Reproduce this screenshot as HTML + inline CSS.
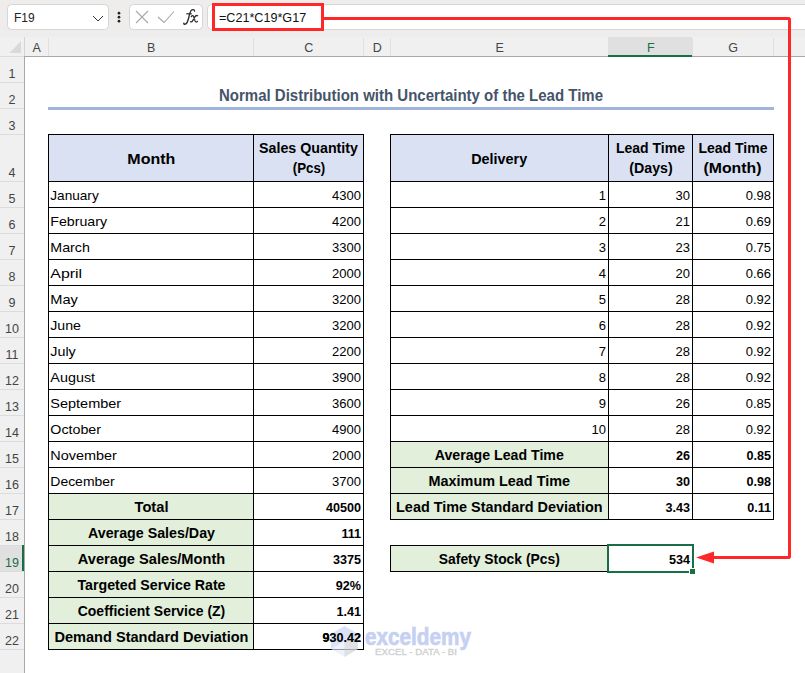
<!DOCTYPE html>
<html><head><meta charset="utf-8"><style>
html,body{margin:0;padding:0;background:#fff;overflow:hidden}
svg{display:block}
text{font-family:"Liberation Sans", sans-serif}
</style></head><body>
<svg width="805" height="673" viewBox="0 0 805 673">
<rect x="0" y="0" width="805" height="673" fill="#ffffff"/>
<rect x="0" y="0" width="805" height="37" fill="#EFEDEC"/>
<rect x="0" y="37" width="805" height="19" fill="#F0F0F0"/>
<rect x="0" y="56" width="24" height="617" fill="#F0F0F0"/>
<rect x="608" y="37" width="84" height="19" fill="#E0E0E0"/>
<rect x="0" y="545" width="24" height="26" fill="#E0E0E0"/>
<rect x="48" y="38" width="1" height="18" fill="#E0E0E0"/>
<rect x="253" y="38" width="1" height="18" fill="#E0E0E0"/>
<rect x="363" y="38" width="1" height="18" fill="#E0E0E0"/>
<rect x="390" y="38" width="1" height="18" fill="#E0E0E0"/>
<rect x="608" y="38" width="1" height="18" fill="#E0E0E0"/>
<rect x="692" y="38" width="1" height="18" fill="#E0E0E0"/>
<rect x="773" y="38" width="1" height="18" fill="#E0E0E0"/>
<rect x="860" y="38" width="1" height="18" fill="#E0E0E0"/>
<rect x="24" y="37" width="1" height="19" fill="#D4D4D4"/>
<rect x="0" y="82" width="24" height="1" fill="#DCDCDC"/>
<rect x="0" y="108" width="24" height="1" fill="#DCDCDC"/>
<rect x="0" y="134" width="24" height="1" fill="#DCDCDC"/>
<rect x="0" y="181" width="24" height="1" fill="#DCDCDC"/>
<rect x="0" y="207" width="24" height="1" fill="#DCDCDC"/>
<rect x="0" y="233" width="24" height="1" fill="#DCDCDC"/>
<rect x="0" y="259" width="24" height="1" fill="#DCDCDC"/>
<rect x="0" y="285" width="24" height="1" fill="#DCDCDC"/>
<rect x="0" y="311" width="24" height="1" fill="#DCDCDC"/>
<rect x="0" y="337" width="24" height="1" fill="#DCDCDC"/>
<rect x="0" y="363" width="24" height="1" fill="#DCDCDC"/>
<rect x="0" y="389" width="24" height="1" fill="#DCDCDC"/>
<rect x="0" y="415" width="24" height="1" fill="#DCDCDC"/>
<rect x="0" y="441" width="24" height="1" fill="#DCDCDC"/>
<rect x="0" y="467" width="24" height="1" fill="#DCDCDC"/>
<rect x="0" y="493" width="24" height="1" fill="#DCDCDC"/>
<rect x="0" y="519" width="24" height="1" fill="#DCDCDC"/>
<rect x="0" y="545" width="24" height="1" fill="#DCDCDC"/>
<rect x="0" y="571" width="24" height="1" fill="#DCDCDC"/>
<rect x="0" y="597" width="24" height="1" fill="#DCDCDC"/>
<rect x="0" y="623" width="24" height="1" fill="#DCDCDC"/>
<rect x="0" y="649" width="24" height="1" fill="#DCDCDC"/>
<rect x="0" y="675" width="24" height="1" fill="#DCDCDC"/>
<rect x="24" y="56" width="781" height="1" fill="#A8A8A8"/>
<rect x="24" y="56" width="1" height="617" fill="#A8A8A8"/>
<polygon points="9.5,53 21,53 21,41" fill="#D9D9D9"/>
<rect x="0" y="56" width="24" height="1" fill="#DCDCDC"/>
<rect x="608" y="55" width="84" height="2" fill="#186E45"/>
<rect x="22" y="545" width="2" height="26" fill="#186E45"/>
<text x="36.7" y="52" font-size="12.5" fill="#444444" text-anchor="middle">A</text>
<text x="151.2" y="52" font-size="12.5" fill="#444444" text-anchor="middle">B</text>
<text x="308.7" y="52" font-size="12.5" fill="#444444" text-anchor="middle">C</text>
<text x="377.2" y="52" font-size="12.5" fill="#444444" text-anchor="middle">D</text>
<text x="499.7" y="52" font-size="12.5" fill="#444444" text-anchor="middle">E</text>
<text x="650.7" y="52" font-size="12.5" fill="#186E45" text-anchor="middle">F</text>
<text x="733.2" y="52" font-size="12.5" fill="#444444" text-anchor="middle">G</text>
<text x="12" y="77.5" font-size="12.5" fill="#444444" text-anchor="middle">1</text>
<text x="12" y="103.5" font-size="12.5" fill="#444444" text-anchor="middle">2</text>
<text x="12" y="129.5" font-size="12.5" fill="#444444" text-anchor="middle">3</text>
<text x="12" y="176.5" font-size="12.5" fill="#444444" text-anchor="middle">4</text>
<text x="12" y="202.5" font-size="12.5" fill="#444444" text-anchor="middle">5</text>
<text x="12" y="228.5" font-size="12.5" fill="#444444" text-anchor="middle">6</text>
<text x="12" y="254.5" font-size="12.5" fill="#444444" text-anchor="middle">7</text>
<text x="12" y="280.5" font-size="12.5" fill="#444444" text-anchor="middle">8</text>
<text x="12" y="306.5" font-size="12.5" fill="#444444" text-anchor="middle">9</text>
<text x="12" y="332.5" font-size="12.5" fill="#444444" text-anchor="middle">10</text>
<text x="12" y="358.5" font-size="12.5" fill="#444444" text-anchor="middle">11</text>
<text x="12" y="384.5" font-size="12.5" fill="#444444" text-anchor="middle">12</text>
<text x="12" y="410.5" font-size="12.5" fill="#444444" text-anchor="middle">13</text>
<text x="12" y="436.5" font-size="12.5" fill="#444444" text-anchor="middle">14</text>
<text x="12" y="462.5" font-size="12.5" fill="#444444" text-anchor="middle">15</text>
<text x="12" y="488.5" font-size="12.5" fill="#444444" text-anchor="middle">16</text>
<text x="12" y="514.5" font-size="12.5" fill="#444444" text-anchor="middle">17</text>
<text x="12" y="540.5" font-size="12.5" fill="#444444" text-anchor="middle">18</text>
<text x="12" y="566.5" font-size="12.5" fill="#186E45" text-anchor="middle">19</text>
<text x="12" y="592.5" font-size="12.5" fill="#444444" text-anchor="middle">20</text>
<text x="12" y="618.5" font-size="12.5" fill="#444444" text-anchor="middle">21</text>
<text x="12" y="644.5" font-size="12.5" fill="#444444" text-anchor="middle">22</text>
<rect x="7.5" y="4.5" width="101" height="25" rx="4" fill="#ffffff" stroke="#D6D6D6"/>
<text x="14" y="22" font-size="12" fill="#222">F19</text>
<polyline points="93,16 98,21 103,16" fill="none" stroke="#3a3a3a" stroke-width="1"/>
<circle cx="119" cy="13.2" r="1.35" fill="#222"/>
<circle cx="119" cy="17.2" r="1.35" fill="#222"/>
<circle cx="119" cy="21.2" r="1.35" fill="#222"/>
<rect x="129.5" y="4.5" width="73" height="25" rx="4" fill="#ffffff" stroke="#D6D6D6"/>
<path d="M136,11 L148,23 M148,11 L136,23" stroke="#A8A8A8" stroke-width="1.1" fill="none"/>
<path d="M158,17 L164,22.5 L174,11.5" stroke="#A8A8A8" stroke-width="1.1" fill="none"/>
<path d="M194.6,11 C194.3,9.4 192.4,9.1 191.2,10.4 C190,11.7 189.6,14 188.9,17 C188.1,20.6 187.3,23.6 185.3,24.2 C184.3,24.5 183.6,24 183.8,23.2" fill="none" stroke="#2a2a2a" stroke-width="1.35" stroke-linecap="round"/>
<path d="M186.3,13.8 L191.8,13.8" stroke="#2a2a2a" stroke-width="1.2"/>
<path d="M191.3,16.6 C192.2,15.3 193.3,15.4 193.8,17 L195,20.9 C195.5,22.3 196.6,22.3 197.4,21.3 M197.6,15.7 C196.8,15.3 195.9,15.6 195.2,16.5 L192.6,20.9 C192,21.9 191.1,22.2 190.5,21.6" fill="none" stroke="#2a2a2a" stroke-width="1.25" stroke-linecap="round"/>
<rect x="207.5" y="4.5" width="805" height="25" rx="4" fill="#ffffff" stroke="#D6D6D6"/>
<text x="219" y="21.7" font-size="12.6" fill="#111">=C21*C19*G17</text>
<text x="411" y="100.5" font-size="15.6" font-weight="bold" fill="#44546A" text-anchor="middle" textLength="384" lengthAdjust="spacingAndGlyphs">Normal Distribution with Uncertainty of the Lead Time</text>
<rect x="48" y="107" width="726" height="3" fill="#A0B4DE"/>
<rect x="48" y="134" width="205" height="47" fill="#D9E1F2"/>
<rect x="253" y="134" width="110" height="47" fill="#D9E1F2"/>
<rect x="390" y="134" width="218" height="47" fill="#D9E1F2"/>
<rect x="608" y="134" width="84" height="47" fill="#D9E1F2"/>
<rect x="692" y="134" width="81" height="47" fill="#D9E1F2"/>
<rect x="48" y="493" width="205" height="156" fill="#E2EFDA"/>
<rect x="390" y="441" width="218" height="78" fill="#E2EFDA"/>
<rect x="390" y="545" width="218" height="26" fill="#E2EFDA"/>
<rect x="48" y="134" width="316" height="1" fill="#000"/>
<rect x="48" y="181" width="316" height="1" fill="#000"/>
<rect x="48" y="207" width="316" height="1" fill="#000"/>
<rect x="48" y="233" width="316" height="1" fill="#000"/>
<rect x="48" y="259" width="316" height="1" fill="#000"/>
<rect x="48" y="285" width="316" height="1" fill="#000"/>
<rect x="48" y="311" width="316" height="1" fill="#000"/>
<rect x="48" y="337" width="316" height="1" fill="#000"/>
<rect x="48" y="363" width="316" height="1" fill="#000"/>
<rect x="48" y="389" width="316" height="1" fill="#000"/>
<rect x="48" y="415" width="316" height="1" fill="#000"/>
<rect x="48" y="441" width="316" height="1" fill="#000"/>
<rect x="48" y="467" width="316" height="1" fill="#000"/>
<rect x="48" y="493" width="316" height="1" fill="#000"/>
<rect x="48" y="519" width="316" height="1" fill="#000"/>
<rect x="48" y="545" width="316" height="1" fill="#000"/>
<rect x="48" y="571" width="316" height="1" fill="#000"/>
<rect x="48" y="597" width="316" height="1" fill="#000"/>
<rect x="48" y="623" width="316" height="1" fill="#000"/>
<rect x="48" y="649" width="316" height="1" fill="#000"/>
<rect x="48" y="134" width="1" height="516" fill="#000"/>
<rect x="253" y="134" width="1" height="516" fill="#000"/>
<rect x="363" y="134" width="1" height="516" fill="#000"/>
<rect x="390" y="134" width="384" height="1" fill="#000"/>
<rect x="390" y="181" width="384" height="1" fill="#000"/>
<rect x="390" y="207" width="384" height="1" fill="#000"/>
<rect x="390" y="233" width="384" height="1" fill="#000"/>
<rect x="390" y="259" width="384" height="1" fill="#000"/>
<rect x="390" y="285" width="384" height="1" fill="#000"/>
<rect x="390" y="311" width="384" height="1" fill="#000"/>
<rect x="390" y="337" width="384" height="1" fill="#000"/>
<rect x="390" y="363" width="384" height="1" fill="#000"/>
<rect x="390" y="389" width="384" height="1" fill="#000"/>
<rect x="390" y="415" width="384" height="1" fill="#000"/>
<rect x="390" y="441" width="384" height="1" fill="#000"/>
<rect x="390" y="467" width="384" height="1" fill="#000"/>
<rect x="390" y="493" width="384" height="1" fill="#000"/>
<rect x="390" y="519" width="384" height="1" fill="#000"/>
<rect x="390" y="134" width="1" height="386" fill="#000"/>
<rect x="608" y="134" width="1" height="386" fill="#000"/>
<rect x="692" y="134" width="1" height="386" fill="#000"/>
<rect x="773" y="134" width="1" height="386" fill="#000"/>
<rect x="390" y="545" width="303" height="1" fill="#000"/>
<rect x="390" y="571" width="303" height="1" fill="#000"/>
<rect x="390" y="545" width="1" height="27" fill="#000"/>
<rect x="608" y="545" width="1" height="27" fill="#000"/>
<rect x="692" y="545" width="1" height="27" fill="#000"/>
<text x="151.3" y="164" font-size="14.2" font-weight="bold" fill="#000" text-anchor="middle" textLength="48" lengthAdjust="spacingAndGlyphs">Month</text>
<text x="308.5" y="152.8" font-size="14.2" font-weight="bold" fill="#000" text-anchor="middle" textLength="99" lengthAdjust="spacingAndGlyphs">Sales Quantity</text>
<text x="309" y="173.1" font-size="14.2" font-weight="bold" fill="#000" text-anchor="middle" textLength="32.5" lengthAdjust="spacingAndGlyphs">(Pcs)</text>
<text x="499.2" y="164" font-size="14.2" font-weight="bold" fill="#000" text-anchor="middle" textLength="56" lengthAdjust="spacingAndGlyphs">Delivery</text>
<text x="650.5" y="152.8" font-size="14.2" font-weight="bold" fill="#000" text-anchor="middle" textLength="69" lengthAdjust="spacingAndGlyphs">Lead Time</text>
<text x="651" y="173.1" font-size="14.2" font-weight="bold" fill="#000" text-anchor="middle" textLength="43.4" lengthAdjust="spacingAndGlyphs">(Days)</text>
<text x="733" y="152.8" font-size="14.2" font-weight="bold" fill="#000" text-anchor="middle" textLength="69" lengthAdjust="spacingAndGlyphs">Lead Time</text>
<text x="732.5" y="173.1" font-size="14.2" font-weight="bold" fill="#000" text-anchor="middle" textLength="58" lengthAdjust="spacingAndGlyphs">(Month)</text>
<text x="50.3" y="200" font-size="13.3" fill="#000" text-anchor="start" textLength="48.4" lengthAdjust="spacingAndGlyphs">January</text>
<text x="361" y="200" font-size="13" fill="#000" text-anchor="end">4300</text>
<text x="50.3" y="226" font-size="13.3" fill="#000" text-anchor="start" textLength="56.8" lengthAdjust="spacingAndGlyphs">February</text>
<text x="361" y="226" font-size="13" fill="#000" text-anchor="end">4200</text>
<text x="50.3" y="252" font-size="13.3" fill="#000" text-anchor="start" textLength="39.6" lengthAdjust="spacingAndGlyphs">March</text>
<text x="361" y="252" font-size="13" fill="#000" text-anchor="end">3300</text>
<text x="50.3" y="278" font-size="13.3" fill="#000" text-anchor="start" textLength="31.8" lengthAdjust="spacingAndGlyphs">April</text>
<text x="361" y="278" font-size="13" fill="#000" text-anchor="end">2000</text>
<text x="50.3" y="304" font-size="13.3" fill="#000" text-anchor="start" textLength="27.6" lengthAdjust="spacingAndGlyphs">May</text>
<text x="361" y="304" font-size="13" fill="#000" text-anchor="end">3200</text>
<text x="50.3" y="330" font-size="13.3" fill="#000" text-anchor="start" textLength="30.7" lengthAdjust="spacingAndGlyphs">June</text>
<text x="361" y="330" font-size="13" fill="#000" text-anchor="end">3200</text>
<text x="50.3" y="356" font-size="13.3" fill="#000" text-anchor="start" textLength="25.5" lengthAdjust="spacingAndGlyphs">July</text>
<text x="361" y="356" font-size="13" fill="#000" text-anchor="end">2200</text>
<text x="50.3" y="382" font-size="13.3" fill="#000" text-anchor="start" textLength="44.8" lengthAdjust="spacingAndGlyphs">August</text>
<text x="361" y="382" font-size="13" fill="#000" text-anchor="end">3900</text>
<text x="50.3" y="408" font-size="13.3" fill="#000" text-anchor="start" textLength="70.9" lengthAdjust="spacingAndGlyphs">September</text>
<text x="361" y="408" font-size="13" fill="#000" text-anchor="end">3600</text>
<text x="50.3" y="434" font-size="13.3" fill="#000" text-anchor="start" textLength="50.7" lengthAdjust="spacingAndGlyphs">October</text>
<text x="361" y="434" font-size="13" fill="#000" text-anchor="end">4900</text>
<text x="50.3" y="460" font-size="13.3" fill="#000" text-anchor="start" textLength="66.6" lengthAdjust="spacingAndGlyphs">November</text>
<text x="361" y="460" font-size="13" fill="#000" text-anchor="end">2000</text>
<text x="50.3" y="486" font-size="13.3" fill="#000" text-anchor="start" textLength="64.4" lengthAdjust="spacingAndGlyphs">December</text>
<text x="361" y="486" font-size="13" fill="#000" text-anchor="end">3700</text>
<text x="151.5" y="512" font-size="14.2" font-weight="bold" fill="#000" text-anchor="middle" textLength="34" lengthAdjust="spacingAndGlyphs">Total</text>
<text x="361" y="512" font-size="12.6" font-weight="bold" fill="#000" text-anchor="end">40500</text>
<text x="151.5" y="538" font-size="14.2" font-weight="bold" fill="#000" text-anchor="middle" textLength="127" lengthAdjust="spacingAndGlyphs">Average Sales/Day</text>
<text x="361" y="538" font-size="12.6" font-weight="bold" fill="#000" text-anchor="end">111</text>
<text x="151.5" y="564" font-size="14.2" font-weight="bold" fill="#000" text-anchor="middle" textLength="147.5" lengthAdjust="spacingAndGlyphs">Average Sales/Month</text>
<text x="361" y="564" font-size="12.6" font-weight="bold" fill="#000" text-anchor="end">3375</text>
<text x="151.5" y="590" font-size="14.2" font-weight="bold" fill="#000" text-anchor="middle" textLength="148" lengthAdjust="spacingAndGlyphs">Targeted Service Rate</text>
<text x="361" y="590" font-size="12.6" font-weight="bold" fill="#000" text-anchor="end">92%</text>
<text x="151.5" y="616" font-size="14.2" font-weight="bold" fill="#000" text-anchor="middle" textLength="147.5" lengthAdjust="spacingAndGlyphs">Coefficient Service (Z)</text>
<text x="361" y="616" font-size="12.6" font-weight="bold" fill="#000" text-anchor="end">1.41</text>
<text x="151.5" y="642" font-size="14.2" font-weight="bold" fill="#000" text-anchor="middle" textLength="194" lengthAdjust="spacingAndGlyphs">Demand Standard Deviation</text>
<text x="361" y="642" font-size="12.6" font-weight="bold" fill="#000" text-anchor="end">930.42</text>
<text x="606" y="200" font-size="13" fill="#000" text-anchor="end">1</text>
<text x="690" y="200" font-size="13" fill="#000" text-anchor="end">30</text>
<text x="771" y="200" font-size="13" fill="#000" text-anchor="end">0.98</text>
<text x="606" y="226" font-size="13" fill="#000" text-anchor="end">2</text>
<text x="690" y="226" font-size="13" fill="#000" text-anchor="end">21</text>
<text x="771" y="226" font-size="13" fill="#000" text-anchor="end">0.69</text>
<text x="606" y="252" font-size="13" fill="#000" text-anchor="end">3</text>
<text x="690" y="252" font-size="13" fill="#000" text-anchor="end">23</text>
<text x="771" y="252" font-size="13" fill="#000" text-anchor="end">0.75</text>
<text x="606" y="278" font-size="13" fill="#000" text-anchor="end">4</text>
<text x="690" y="278" font-size="13" fill="#000" text-anchor="end">20</text>
<text x="771" y="278" font-size="13" fill="#000" text-anchor="end">0.66</text>
<text x="606" y="304" font-size="13" fill="#000" text-anchor="end">5</text>
<text x="690" y="304" font-size="13" fill="#000" text-anchor="end">28</text>
<text x="771" y="304" font-size="13" fill="#000" text-anchor="end">0.92</text>
<text x="606" y="330" font-size="13" fill="#000" text-anchor="end">6</text>
<text x="690" y="330" font-size="13" fill="#000" text-anchor="end">28</text>
<text x="771" y="330" font-size="13" fill="#000" text-anchor="end">0.92</text>
<text x="606" y="356" font-size="13" fill="#000" text-anchor="end">7</text>
<text x="690" y="356" font-size="13" fill="#000" text-anchor="end">28</text>
<text x="771" y="356" font-size="13" fill="#000" text-anchor="end">0.92</text>
<text x="606" y="382" font-size="13" fill="#000" text-anchor="end">8</text>
<text x="690" y="382" font-size="13" fill="#000" text-anchor="end">28</text>
<text x="771" y="382" font-size="13" fill="#000" text-anchor="end">0.92</text>
<text x="606" y="408" font-size="13" fill="#000" text-anchor="end">9</text>
<text x="690" y="408" font-size="13" fill="#000" text-anchor="end">26</text>
<text x="771" y="408" font-size="13" fill="#000" text-anchor="end">0.85</text>
<text x="606" y="434" font-size="13" fill="#000" text-anchor="end">10</text>
<text x="690" y="434" font-size="13" fill="#000" text-anchor="end">28</text>
<text x="771" y="434" font-size="13" fill="#000" text-anchor="end">0.92</text>
<text x="499.3" y="460" font-size="14.2" font-weight="bold" fill="#000" text-anchor="middle" textLength="129" lengthAdjust="spacingAndGlyphs">Average Lead Time</text>
<text x="690" y="460" font-size="12.6" font-weight="bold" fill="#000" text-anchor="end">26</text>
<text x="771" y="460" font-size="12.6" font-weight="bold" fill="#000" text-anchor="end">0.85</text>
<text x="499.3" y="486" font-size="14.2" font-weight="bold" fill="#000" text-anchor="middle" textLength="141.5" lengthAdjust="spacingAndGlyphs">Maximum Lead Time</text>
<text x="690" y="486" font-size="12.6" font-weight="bold" fill="#000" text-anchor="end">30</text>
<text x="771" y="486" font-size="12.6" font-weight="bold" fill="#000" text-anchor="end">0.98</text>
<text x="499.3" y="512" font-size="14.2" font-weight="bold" fill="#000" text-anchor="middle" textLength="206.5" lengthAdjust="spacingAndGlyphs">Lead Time Standard Deviation</text>
<text x="690" y="512" font-size="12.6" font-weight="bold" fill="#000" text-anchor="end">3.43</text>
<text x="771" y="512" font-size="12.6" font-weight="bold" fill="#000" text-anchor="end">0.11</text>
<text x="499.3" y="564" font-size="14.2" font-weight="bold" fill="#000" text-anchor="middle" textLength="121" lengthAdjust="spacingAndGlyphs">Safety Stock (Pcs)</text>
<text x="690" y="564" font-size="12.6" font-weight="bold" fill="#000" text-anchor="end">534</text>
<rect x="608" y="545" width="85" height="27" fill="none" stroke="#186E45" stroke-width="2"/>
<rect x="689" y="568" width="7" height="7" fill="#ffffff"/>
<rect x="690" y="569" width="5" height="5" fill="#186E45"/>
<rect x="213.5" y="4.5" width="109" height="25" fill="none" stroke="#FF2828" stroke-width="3"/>
<polyline points="324,18.5 789.5,18.5 789.5,557.5 712,557.5" fill="none" stroke="#FF2828" stroke-width="3" stroke-linejoin="bevel"/>
<polygon points="696,557.5 714,551.5 714,563.5" fill="#FF2828"/>
<g opacity="0.85">
<polygon points="344.5,626 358,634 358,649 344.5,657 331,649 331,634" fill="#E6EBF8" fill-opacity="0.75"/>
<polygon points="344.5,626 331,634 331,649 344.5,641 358,634" fill="#C9D5F3" fill-opacity="0.7"/>
<polygon points="344.5,641 358,634 358,649 344.5,657" fill="#CFCFD4" fill-opacity="0.6"/>
</g>
<text x="365" y="645" font-size="23" fill="#C6D0F2" stroke="#C6D0F2" stroke-width="0.7" textLength="106" lengthAdjust="spacingAndGlyphs" style="font-weight:bold">exceldemy</text>
<text x="361" y="642" font-size="12.6" font-weight="bold" fill="#000" text-anchor="end">930.42</text>
<text x="375" y="654.5" font-size="8.3" fill="#CFCFCF" stroke="#CFCFCF" stroke-width="0.3" textLength="82" lengthAdjust="spacingAndGlyphs">EXCEL - DATA - BI</text>
</svg>
</body></html>
